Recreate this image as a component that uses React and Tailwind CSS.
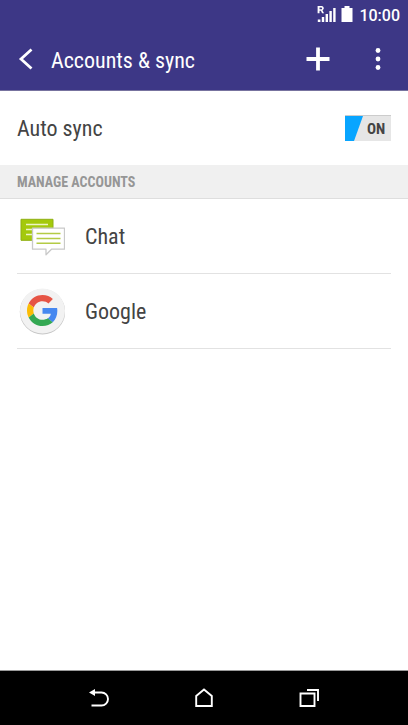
import { useState } from 'react'

const SignalIcon = () => (
  <svg className="w-5 h-5" viewBox="0 0 20 20" fill="currentColor" aria-hidden="true">
    <path d="M.6 0h3.900a2.200 2.200 0 0 1 1 4.200L7 7.300H5.100L3.900 4.800H2.500v2.500H.6zM2.500 1.500v1.800h1.700a.9.9 0 0 0 0-1.800z" fillRule="evenodd" />
    <path d="M.8 13.500h2.600V16H.8zM4.800 11h2.400v5H4.800zM8.600 8H11v8H8.600zM12.400 5h2.400v11h-2.400zM16.200 2h2.400v14h-2.400z" />
  </svg>
)

const BatteryIcon = () => (
  <svg className="w-3 h-4" viewBox="0 0 12 16" fill="currentColor" aria-hidden="true">
    <path d="M3.500 0h5v2h3v14H.5V2h3z" />
  </svg>
)

const ChatIcon = () => (
  <svg className="w-12 h-12" viewBox="-1 0 48 48" aria-hidden="true">
    <path d="M3 7.300h32v21H3z" fill="#a4c90c" stroke="#8fb012" />
    <path d="M8 12.500h22M8 17.500h22M8 22.500h8" stroke="#edf5c5" strokeWidth="1.500" />
    <path d="M14.500 16.200h32v21H33.500L28 42.700v-5.500H14.500z" fill="#fff" stroke="#c9c9c9" strokeWidth="1.300" strokeLinejoin="round" />
    <path d="M18.500 21.500h24M18.500 26.500h24M18.500 31.300h24" stroke="#b4cb45" strokeWidth="1.500" />
  </svg>
)

const GoogleIcon = () => (
  <svg className="w-12 h-12" viewBox="-1 0 48 48" aria-hidden="true">
    <circle cx="24.500" cy="24.800" r="22.700" fill="#c6c6c6" />
    <circle cx="24.500" cy="24" r="22.500" fill="#f2f2f2" />
    <svg x="9" y="8" width="31" height="31" viewBox="0 0 48 48">
      <path fill="#e65445" d="M24 9.500c3.540 0 6.710 1.220 9.210 3.600l6.850-6.850C35.900 2.380 30.470 0 24 0 14.620 0 6.510 5.380 2.560 13.220l7.980 6.190C12.430 13.720 17.740 9.500 24 9.500z" />
      <path fill="#4688f0" d="M46.980 24.550c0-1.570-.15-3.090-.38-4.550H24v9.020h12.940c-.58 2.960-2.260 5.480-4.780 7.180l7.730 6c4.510-4.180 7.090-10.360 7.090-17.650z" />
      <path fill="#FBBC05" d="M10.530 28.590c-.48-1.450-.76-2.990-.76-4.590s.27-3.140.76-4.590l-7.980-6.190C.92 16.460 0 20.120 0 24c0 3.880.92 7.540 2.560 10.780l7.970-6.190z" />
      <path fill="#34A853" d="M24 48c6.480 0 11.930-2.130 15.890-5.810l-7.730-6c-2.150 1.450-4.920 2.300-8.160 2.300-6.260 0-11.570-4.220-13.470-9.910l-7.980 6.190C6.510 42.620 14.620 48 24 48z" />
    </svg>
  </svg>
)

const accounts = [
  { name: 'Chat', Icon: ChatIcon },
  { name: 'Google', Icon: GoogleIcon }
]

const App = () => {
  const [autoSync, setAutoSync] = useState(true)

  return (
    <div className="min-h-screen flex flex-col bg-white text-[#444444] font-['Roboto_Condensed','Liberation_Sans_Narrow',Roboto,sans-serif]">
      <header className="bg-[#3d3786] text-white border-b border-[#77739f]">
        <div className="flex items-center justify-end h-7 pt-1 pr-2 gap-1">
          <div className="flex items-start gap-1 h-5">
            <SignalIcon />
            <BatteryIcon />
          </div>
          <span className="pl-0.5 text-base leading-5 font-medium font-[Roboto,sans-serif]">10:00</span>
        </div>
        <div className="flex items-center h-[62px] px-4">
          <button type="button" aria-label="Back" className="w-5 h-10 flex items-center justify-center">
            <svg className="w-5 h-6" viewBox="0 0 20 24" fill="none" stroke="currentColor" strokeWidth="2.800">
              <path d="M15.500 2.500 5 12l10.500 9.500" />
            </svg>
          </button>
          <h1 className="flex-1 pl-[15px] pt-1 text-[22px] leading-8">Accounts &amp; sync</h1>
          <button type="button" aria-label="Add account" className="w-7 h-10 mr-8 flex items-center justify-center">
            <svg className="w-6 h-6" viewBox="0 0 24 24" stroke="currentColor" strokeWidth="3.800">
              <path d="M12 .5v23M.5 12h23" />
            </svg>
          </button>
          <button type="button" aria-label="More options" className="w-7 h-10 flex items-center justify-center">
            <svg className="w-6 h-6" viewBox="0 0 24 24" fill="currentColor">
              <circle cx="12" cy="3.500" r="2.400" />
              <circle cx="12" cy="12" r="2.400" />
              <circle cx="12" cy="20.500" r="2.400" />
            </svg>
          </button>
        </div>
      </header>

      <main className="flex-1">
        <label className="flex items-center justify-between h-[74px] px-[17px] cursor-pointer">
          <span className="pt-0.5 text-[22px] leading-8">Auto sync</span>
          <input
            type="checkbox"
            checked={autoSync}
            onChange={(e) => setAutoSync(e.target.checked)}
            className="sr-only"
          />
          <span className="flex items-center w-[46px] h-[26px] bg-[#e6e6e6] border-t border-[#cccccc]">
            <svg className="w-[18px] h-[25px]" viewBox="0 0 18 25" aria-hidden="true">
              <path d="M0 0h18L9 25H0z" fill={autoSync ? '#08a5ff' : '#a0a0a0'} />
            </svg>
            <span className="flex-1 pr-0.5 text-center text-[15px] leading-6 font-bold">{autoSync ? 'ON' : 'OFF'}</span>
          </span>
        </label>

        <h2 className="h-[34px] px-[17px] bg-[#f0f0f0] border-b border-[#dedede] text-sm leading-[34px] font-bold text-[#969696] uppercase">
          Manage accounts
        </h2>

        <ul className="px-[17px]">
          {accounts.map(({ name, Icon }) => (
            <li key={name} className="border-b border-[#e2e2e2]">
              <button type="button" className="w-full h-[74px] flex items-center gap-5 text-left">
                <Icon />
                <span className="pt-0.5 text-[22px] leading-8">{name}</span>
              </button>
            </li>
          ))}
        </ul>
      </main>

      <nav className="h-[55px] bg-black text-white border-t border-[#9a9a9a] flex items-center justify-center gap-[81px]">
        <button type="button" aria-label="Back">
          <svg className="w-6 h-6" viewBox="0 0 24 24" fill="none" stroke="currentColor" strokeWidth="1.900">
            <path d="M5 6.500h9.500a6.500 6.500 0 0 1 0 13H4.500" />
            <path d="M2 6.500 8 3v7z" fill="currentColor" stroke="none" />
          </svg>
        </button>
        <button type="button" aria-label="Home">
          <svg className="w-6 h-6" viewBox="0 0 24 24" fill="none" stroke="currentColor" strokeWidth="1.900">
            <path d="M4.200 20V10L12 3.500l7.800 6.500v10z" />
          </svg>
        </button>
        <button type="button" aria-label="Recent apps">
          <svg className="w-6 h-6" viewBox="0 0 24 24" fill="none" stroke="currentColor" strokeWidth="1.900">
            <path d="M3.500 7.500h14V20h-14z" />
            <path d="M10 4h11v11" />
          </svg>
        </button>
      </nav>
    </div>
  )
}

export default App
